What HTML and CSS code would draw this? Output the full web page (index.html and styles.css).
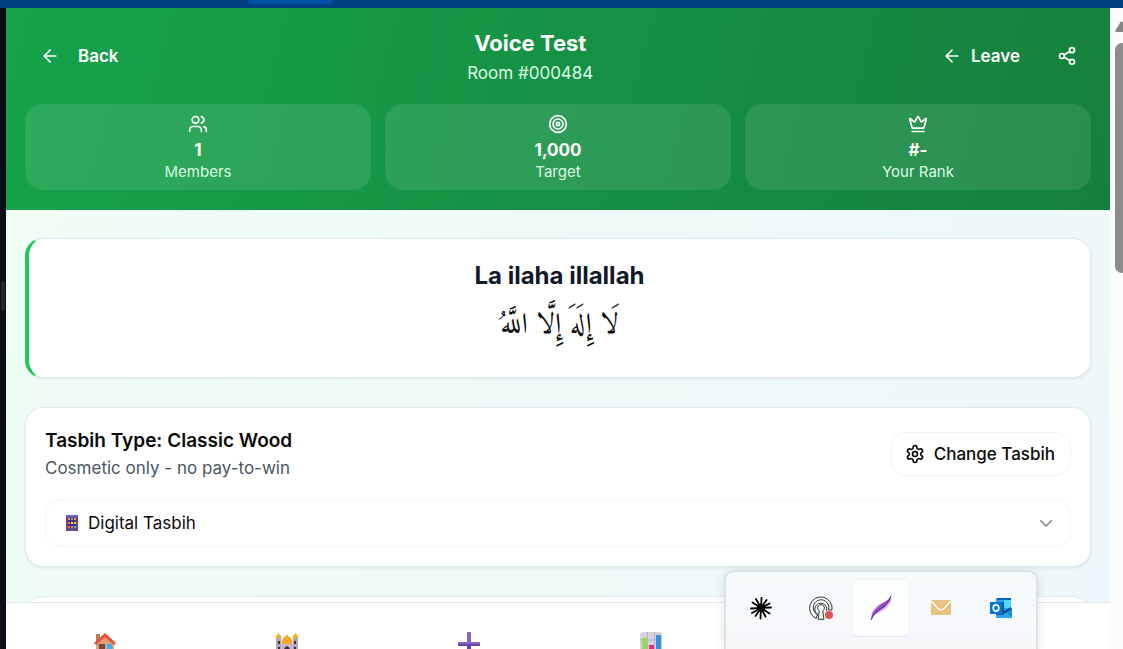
FILE: index.html
```html
<!DOCTYPE html>
<html lang="en">
<head>
<meta charset="utf-8">
<meta name="viewport" content="width=device-width, initial-scale=1">
<title>Voice Test</title>
<link rel="stylesheet" href="styles.css">
</head>
<body>
<div class="titlebar"><div class="titlebar-tab"></div></div>
<div class="workspace">
  <div class="side-rail"><div class="rail-grip"></div></div>
  <div class="app">
    <div class="scroller">
      <header class="room-header">
        <div class="room-bar">
          <button class="ghost-btn back-btn" type="button">
            <svg class="icon" viewBox="0 0 24 24"><path d="m12 19-7-7 7-7M19 12H5"/></svg>
            Back
          </button>
          <div class="room-title">
            <h1>Voice Test</h1>
            <p>Room #000484</p>
          </div>
          <div class="room-actions">
            <button class="ghost-btn" type="button">
              <svg class="icon" viewBox="0 0 24 24"><path d="m12 19-7-7 7-7M19 12H5"/></svg>
              Leave
            </button>
            <button class="ghost-btn share-btn" type="button" aria-label="Share">
              <svg class="icon" viewBox="0 0 24 24"><circle cx="18" cy="5" r="3"/><circle cx="6" cy="12" r="3"/><circle cx="18" cy="19" r="3"/><path d="m8.6 13.5 6.8 4M15.400 6.500l-6.800 4"/></svg>
            </button>
          </div>
        </div>
        <div class="stats">
          <div class="stat">
            <svg class="icon" viewBox="0 0 24 24"><path d="M16 21v-2a4 4 0 0 0-4-4H6a4 4 0 0 0-4 4v2"/><circle cx="9" cy="7" r="4"/><path d="M22 21v-2a4 4 0 0 0-3-3.870M16 3.130a4 4 0 0 1 0 7.750"/></svg>
            <strong>1</strong>
            <span>Members</span>
          </div>
          <div class="stat">
            <svg class="icon" viewBox="0 0 24 24"><circle cx="12" cy="12" r="10"/><circle cx="12" cy="12" r="6"/><circle cx="12" cy="12" r="2"/></svg>
            <strong>1,000</strong>
            <span>Target</span>
          </div>
          <div class="stat">
            <svg class="icon" viewBox="0 0 24 24"><path d="M11.562 3.266a.5.5 0 0 1 .876 0L15.390 8.870a1 1 0 0 0 1.516.294L21.183 5.500a.5.5 0 0 1 .798.519l-2.834 10.246a1 1 0 0 1-.956.734H5.810a1 1 0 0 1-.957-.734L2.020 6.020a.5.5 0 0 1 .798-.519l4.276 3.664a1 1 0 0 0 1.516-.294zM5 21h14"/></svg>
            <strong>#-</strong>
            <span>Your Rank</span>
          </div>
        </div>
      </header>
      <main class="content">
        <section class="card dhikr">
          <h2>La ilaha illallah</h2>
          <p class="arabic" lang="ar" dir="rtl">لَا إِلَهَ إِلَّا اللَّهُ</p>
        </section>
        <section class="card">
          <div class="tasbih-head">
            <div class="tasbih-text">
              <h3>Tasbih Type: Classic Wood</h3>
              <p>Cosmetic only - no pay-to-win</p>
            </div>
            <button class="outline-btn" type="button">
              <svg class="icon" viewBox="0 0 24 24"><path d="M12.220 2h-.44a2 2 0 0 0-2 2v.18a2 2 0 0 1-1 1.730l-.43.25a2 2 0 0 1-2 0l-.15-.08a2 2 0 0 0-2.730.73l-.22.38a2 2 0 0 0 .73 2.730l.15.1a2 2 0 0 1 1 1.720v.51a2 2 0 0 1-1 1.740l-.15.09a2 2 0 0 0-.73 2.730l.22.38a2 2 0 0 0 2.730.73l.15-.08a2 2 0 0 1 2 0l.43.25a2 2 0 0 1 1 1.730V20a2 2 0 0 0 2 2h.44a2 2 0 0 0 2-2v-.18a2 2 0 0 1 1-1.730l.43-.25a2 2 0 0 1 2 0l.15.08a2 2 0 0 0 2.730-.73l.22-.39a2 2 0 0 0-.73-2.730l-.15-.08a2 2 0 0 1-1-1.740v-.5a2 2 0 0 1 1-1.740l.15-.09a2 2 0 0 0 .73-2.730l-.22-.38a2 2 0 0 0-2.730-.73l-.15.08a2 2 0 0 1-2 0l-.43-.25a2 2 0 0 1-1-1.730V4a2 2 0 0 0-2-2z"/><circle cx="12" cy="12" r="3"/></svg>
              Change Tasbih
            </button>
          </div>
          <div class="select-box">
            <svg class="abacus" viewBox="0 0 12 16"><path fill="#624a8c" d="M0 0h12v16H0z"/><path fill="#6b66bd" d="M0 0h12v2H0z"/><path fill="#3c3570" d="M2 3h8v10H2z"/><g fill="#ff8a3d"><path d="M2 3h2v2H2zM8 3h2v2H8zM5 11h2v2H5z"/></g><g fill="#4fb6ff"><path d="M5 3h2v2H5zM8 11h2v2H8z"/></g><g fill="#ffd24a"><path d="M5 7h2v2H5zM8 7h2v2H8z"/></g><path fill="#ff624d" d="M2 7h2v2H2zM2 11h2v2H2z"/></svg>
            <select aria-label="Tasbih type"><option>Digital Tasbih</option></select>
            <svg class="icon chevron" viewBox="0 0 24 24"><path d="m5 9 7 7 7-7"/></svg>
          </div>
        </section>
        <section class="card"></section>
      </main>
    </div>
    <nav class="tabbar">
      <a href="#home" aria-label="Home">
        <svg class="tab-icon" viewBox="0 0 24 24"><path fill="#b9805c" d="M3 2h4v8H3z"/><path fill="#dfa076" d="M3 11 12 3l9 8v12H3z"/><path fill="#e8513c" d="m12 1 11 10-2 2-9-8-9 8-2-2z"/><path fill="#74483f" d="M6 12h6v11H6z"/><path fill="#3cb4f2" d="M14 12h5v5h-5z"/></svg>
      </a>
      <a href="#mosque" aria-label="Rooms">
        <svg class="tab-icon" viewBox="0 0 24 24"><path fill="#b3a6b9" d="M1 6h5v17H1zM18 6h5v17h-5z"/><path fill="#c4b8c9" d="M6 12h12v11H6z"/><path fill="#f5ab28" d="M3.500 0 4 2q3 2 2 4H1q-1-2 2-4zM20.500 0l.5 2q3 2 2 4h-5q-1-2 2-4zM12 2l1 2q6 3 4 8H7q-2-5 4-8z"/><path fill="#3d2b4c" d="M3 9h2v3H3zM19 9h2v3h-2zM3 15h2v4H3zM19 15h2v4h-2zM9 23v-5q0-3 3-4 3 1 3 4v5z"/></svg>
      </a>
      <a href="#create" aria-label="Create">
        <svg class="tab-icon" viewBox="0 0 24 24"><path fill="#8068bd" d="M10 1q0-1 1-1h2q1 0 1 1v9h8q1 0 1 1v2q0 1-1 1h-8v8h-4v-8H2q-1 0-1-1v-2q0-1 1-1h8z"/><path fill="#6642b5" d="M1 12h22v1q0 1-1 1h-8v8h-4v-8H2q-1 0-1-1z"/></svg>
      </a>
      <a href="#stats" aria-label="Statistics">
        <svg class="tab-icon" viewBox="0 0 24 24"><rect x="1" width="22" height="24" rx="3" fill="#d8d1dd"/><path stroke="#b9b0c0" d="M8.500 0v24M15.500 0v24M1 8h22"/><path fill="#93dc57" d="M3 6h5v18H3z"/><path fill="#e92a76" d="M10 13h5v11h-5z"/><path fill="#2b92e4" d="M17 3h5v21h-5z"/></svg>
      </a>
      <a href="#friends" aria-label="Friends"></a>
      <a href="#profile" aria-label="Profile"></a>
    </nav>
  </div>
  <div class="scrollbar">
    <svg class="scroll-up" viewBox="0 0 14 11"><path fill="#858585" d="M1 11Q0 11 .5 9.500L5.500 1Q6.500 0 8 1l6 8v2z"/></svg>
    <div class="thumb"></div>
  </div>
</div>
<div class="tray">
  <button type="button" aria-label="Burst">
    <svg class="tray-icon" viewBox="0 0 24 24"><path stroke="#000" stroke-width="1.800" stroke-linecap="round" d="M12.500 2 11.500 22.500M2 12.500l20-1M7 3l9.500 17.500M17.500 4l-11 16M3.500 6.500l17 11M3 17l17.500-9.500"/><circle cx="12" cy="12" r="4"/></svg>
  </button>
  <button type="button" aria-label="Keyhole">
    <svg class="tray-icon" viewBox="0 0 24 24" fill="none" stroke="#333"><path d="M7 22.500l1.500-3.500a8 8 0 0 1-2.500-2.500M7 22.500A11.300 11.300 0 1 1 23 14h-3.500A7.800 7.800 0 1 0 6 16.500"/><path d="M9 18.500a6 6 0 1 1 8.500-3.500"/><path d="M10.300 15a3.400 3.400 0 1 1 3.400 0l1.300 8.300H9z"/><circle cx="20" cy="19" r="4" fill="#e05252" stroke="none"/></svg>
  </button>
  <button class="active" type="button" aria-label="Feather">
    <svg class="tray-icon" viewBox="0 0 24 24"><path fill="#cdb0df" d="M22 0q1 6-3 10-3 4-8 6-5 2-8.500 6Q2 16 6 12q4-4 9-6 5-2 7-6z"/><path fill="#9747c9" d="M22 0q0 4-3 7-3 4-8 7-6 4-8.500 9Q2 18 6 14q3-4 8-7 6-3 8-7z"/><path fill="none" stroke="#5f1f91" d="M2 24q1-5 8-10 9-5 12-14"/></svg>
  </button>
  <button type="button" aria-label="Mail">
    <svg class="tray-icon" viewBox="0 0 24 24"><path fill="#e9c180" d="M2 4h20v15H2z"/><path fill="none" stroke="#fff" stroke-width="1.500" d="m2 5 7 7.500q3 2.500 6 0L22 5"/></svg>
  </button>
  <button type="button" aria-label="Outlook">
    <svg class="tray-icon" viewBox="0 0 24 24"><path fill="#28a8ea" d="M7 2h15v10l1 1v9H7z"/><path fill="#0364b8" d="M8 2h14v2H8z"/><path fill="#50d9ff" d="M15 4h7v8h-7z"/><path fill="#1490df" d="m15 14 8 8V12z"/><path fill="#14447d" d="m14 16 8-5v2l-7 5z"/><path fill="#0a58a0" d="M7 6h8v13H7z"/><path fill="#0078d4" d="M1 6h12v12H1z"/><ellipse cx="7" cy="12" rx="2.800" ry="3.200" fill="none" stroke="#fff" stroke-width="1.700"/></svg>
  </button>
</div>
</body>
</html>
```
FILE: styles.css
```css
* { box-sizing: border-box; }

body {
  margin: 0;
  height: 100vh;
  display: flex;
  flex-direction: column;
  overflow: hidden;
  position: relative;
  font-family: Inter, "Liberation Sans", sans-serif;
  font-size: 17px;
  color: #0a0a0a;
}

h1, h2, h3, p { margin: 0; }

button, select {
  font: inherit;
  color: inherit;
  background: none;
  border: 0;
  padding: 0;
}

.icon {
  width: 20px;
  height: 20px;
  flex: none;
  fill: none;
  stroke: currentColor;
  stroke-width: 2;
  stroke-linecap: round;
  stroke-linejoin: round;
}

.titlebar { height: 8px; flex: none; background: #004080; padding-left: 248px; }
.titlebar-tab { width: 85px; height: 4px; background: #0050a8; border-radius: 0 0 4px 4px; }

.workspace { flex: 1; min-height: 0; display: flex; }

.side-rail { width: 6px; flex: none; background: #0e0e17; padding: 273px 1px 0; }
.rail-grip { height: 30px; border-radius: 2px; background: #24242f; }

.app { flex: 1; min-width: 0; display: flex; flex-direction: column; }

.scroller {
  flex: 1;
  min-height: 0;
  overflow: hidden;
  background: linear-gradient(110deg, #f0fdf4, #edf7fb);
}

.room-header {
  padding: 20px 19px;
  color: #fff;
  background: linear-gradient(105deg, #16a34a, #15803d);
}

.room-bar { display: flex; align-items: flex-start; justify-content: space-between; }
.room-title { text-align: center; }
.room-title h1 { font-size: 22px; line-height: 30px; font-weight: 700; }
.room-title p { line-height: 30px; color: #dcfce7; }
.room-actions { display: flex; gap: 8px; }

.ghost-btn {
  display: flex;
  align-items: center;
  gap: 9px;
  height: 56px;
  padding: 0 15px;
  font-weight: 600;
}
.back-btn { gap: 18px; }
.share-btn { padding: 0 14px; }

.stats { display: grid; grid-template-columns: repeat(3, 1fr); gap: 14px; margin-top: 16px; }
.stat {
  display: flex;
  flex-direction: column;
  align-items: center;
  padding: 10px 10px 8px;
  border-radius: 18px;
  background: rgba(255, 255, 255, 0.1);
}
.stat strong { font-weight: 700; line-height: 24px; margin-top: 4px; }
.stat span { font-size: 15px; line-height: 20px; color: #dcfce7; }

.content { padding: 28px 19px; display: flex; flex-direction: column; gap: 29px; }

.card {
  padding: 19px;
  min-height: 80px;
  background: #fff;
  border: 1px solid #e2e8f0;
  border-radius: 18px;
  box-shadow: 0 1px 3px rgba(15, 23, 42, 0.08);
}

.dhikr { border-left: 4px solid #22c55e; text-align: center; }
.dhikr h2 { font-size: 24px; line-height: 36px; font-weight: 700; color: #111827; }
.arabic {
  font-family: "Arabic Typesetting", Amiri, "Noto Naskh Arabic", "DejaVu Sans", serif;
  font-size: 29px;
  line-height: 64px;
}

.tasbih-head { display: flex; align-items: center; justify-content: space-between; }
.tasbih-text h3 { font-size: 19px; line-height: 28px; font-weight: 600; }
.tasbih-text p { line-height: 26px; color: #4b5563; }

.outline-btn {
  display: flex;
  align-items: center;
  gap: 9px;
  height: 44px;
  padding: 0 15px 0 14px;
  border: 1px solid #f1f3f6;
  border-radius: 16px;
  font-weight: 500;
}

.select-box {
  display: flex;
  align-items: center;
  gap: 10px;
  height: 48px;
  margin-top: 18px;
  padding: 0 15px 0 20px;
  border: 1px solid #f4f5f7;
  border-radius: 16px;
}
.select-box select { flex: 1; appearance: none; outline: 0; }
.abacus { width: 12px; height: 16px; }
.chevron { width: 18px; height: 18px; color: #808080; }

.tabbar {
  height: 47px;
  flex: none;
  display: grid;
  grid-template-columns: repeat(6, 1fr);
  padding: 29px 4px 0 8px;
  overflow: hidden;
  background: #fff;
  border-top: 1px solid #e5e7eb;
}
.tabbar a { display: flex; justify-content: center; }
.tab-icon { width: 24px; height: 24px; }

.scrollbar { width: 13px; flex: none; overflow: hidden; background: #fcfcfc; padding: 13px 0 0 5px; }
.scroll-up { display: block; width: 14px; height: 11px; }
.thumb { width: 14px; height: 230px; margin-top: 11px; border-radius: 7px; background: #8b8b8b; }

.tray {
  position: absolute;
  right: 85px;
  bottom: 0;
  display: flex;
  gap: 2px;
  height: 79px;
  padding: 7px 6px 0;
  border: 2px solid #dbe4e4;
  border-bottom: 0;
  border-radius: 10px 10px 0 0;
  background: linear-gradient(#f5fafb, #f7f7fa);
  box-shadow: 0 2px 10px rgba(0, 0, 0, 0.12);
}
.tray button {
  display: flex;
  align-items: center;
  justify-content: center;
  width: 58px;
  height: 58px;
  border: 1px solid transparent;
  border-radius: 6px;
}
.tray .active { background: #fcfdfe; border-color: #eef1f3; border-bottom-color: #e2e5e8; }
.tray-icon { width: 24px; height: 24px; }
```
